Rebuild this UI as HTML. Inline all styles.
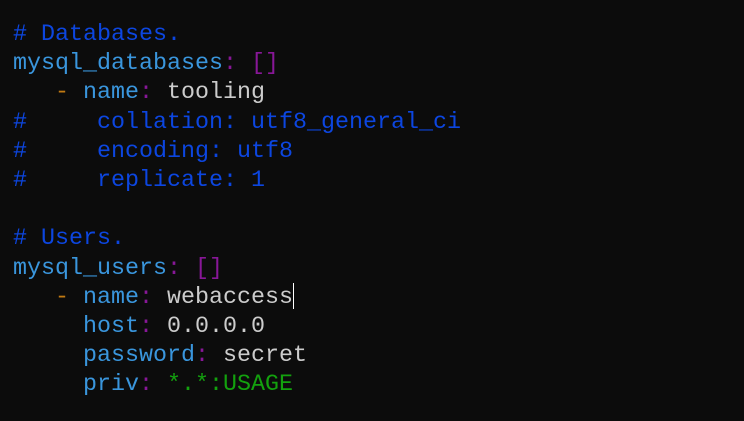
<!DOCTYPE html>
<html><head><style>
html,body{margin:0;padding:0;background:#0c0c0c;width:744px;height:421px;overflow:hidden}
pre{margin:0;position:absolute;left:13px;top:21px;font-family:"Liberation Mono",monospace;font-size:23.33px;line-height:29.2px;color:#cccccc;letter-spacing:0}
.c{color:#0c46e0}.k{color:#3a96dd}.p{color:#881798}.d{color:#c27a12}.g{color:#13a10e}
.cur{position:absolute;left:293px;top:283px;width:1px;height:26px;background:#fff}
</style></head><body>
<pre><span class="c"># Databases.</span>
<span class="k">mysql_databases</span><span class="p">: []</span>
   <span class="d">-</span> <span class="k">name</span><span class="p">:</span> tooling
<span class="c">#     collation: utf8_general_ci</span>
<span class="c">#     encoding: utf8</span>
<span class="c">#     replicate: 1</span>

<span class="c"># Users.</span>
<span class="k">mysql_users</span><span class="p">: []</span>
   <span class="d">-</span> <span class="k">name</span><span class="p">:</span> webaccess
     <span class="k">host</span><span class="p">:</span> 0.0.0.0
     <span class="k">password</span><span class="p">:</span> secret
     <span class="k">priv</span><span class="p">:</span> <span class="g">*.*:USAGE</span></pre>
<div class="cur"></div>
</body></html>
